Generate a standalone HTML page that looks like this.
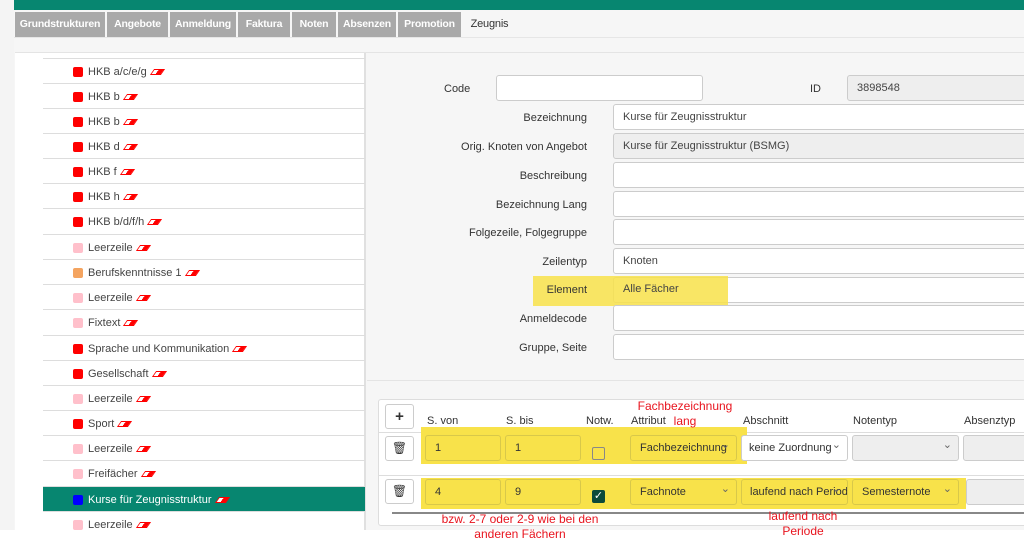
<!DOCTYPE html><html><head><meta charset="utf-8"><style>
*{box-sizing:border-box;margin:0;padding:0}
body{width:1024px;height:546px;background:#fff;font-family:"Liberation Sans",sans-serif;font-size:11px;color:#333;position:relative;overflow:hidden}
.a{position:absolute}
.tab{position:absolute;top:12px;height:25px;background:#a9a9a9;color:#fff;font-weight:bold;font-size:10.5px;line-height:25px;text-align:center;letter-spacing:-0.2px;white-space:nowrap;overflow:hidden}
.row{position:absolute;left:43px;width:322px;height:25px;border-top:1px solid #ddd;line-height:26px;padding-left:45px;font-size:11px;color:#444}
.sq{position:absolute;left:30px;top:8px;width:10px;height:10px;border-radius:2px}
.er{display:inline-block;width:11px;height:6px;border:1.5px solid #f00;background:linear-gradient(90deg,#fff 45%,#f00 45%);transform:skewX(-35deg);margin-left:5px;vertical-align:0px}
.lbl{position:absolute;right:437px;font-size:11px;color:#333;text-align:right}
.inp{position:absolute;left:613px;width:420px;height:26px;background:#fff;border:1px solid #ccc;border-radius:3px;font-size:11px;line-height:25px;padding-left:9px;color:#444}
.g{background:#eee}
.hl{position:absolute;background:#f8e24a}
.cell{position:absolute;height:26px;border:1px solid #d8c84a;border-radius:3px;font-size:11px;line-height:24px;padding-left:9px;color:#333;overflow:hidden;white-space:nowrap}
.sel{padding-right:16px}
.sel:after{content:"⌄";position:absolute;right:6px;top:-3px;font-size:11px;color:#666}
.th{position:absolute;top:415px;font-size:11px;color:#333}
.red{position:absolute;color:#e8141e;font-size:12px;text-align:center;line-height:15px}
.btn{position:absolute;left:385px;width:29px;height:25px;background:#fff;border:1px solid #ccc;border-radius:3px;text-align:center;line-height:23px;font-size:12px}
</style></head><body>
<div class="a" style="left:0;top:0;width:14px;height:546px;background:#f4f4f4"></div>
<div class="a" style="left:14px;top:0;width:1010px;height:10px;background:#078670"></div>
<div class="a" style="left:14px;top:10px;width:1010px;height:520px;background:#f6f6f6"></div>
<div class="a" style="left:14px;top:37px;width:1010px;height:1px;background:#e6e6e6"></div>
<div class="tab" style="left:15px;width:90px">Grundstrukturen</div>
<div class="tab" style="left:107px;width:61px">Angebote</div>
<div class="tab" style="left:170px;width:66px">Anmeldung</div>
<div class="tab" style="left:238px;width:52px">Faktura</div>
<div class="tab" style="left:292px;width:44px">Noten</div>
<div class="tab" style="left:338px;width:58px">Absenzen</div>
<div class="tab" style="left:398px;width:63px">Promotion</div>
<div class="tab" style="left:463px;width:53px;background:#f6f6f6;color:#333;font-weight:normal;font-size:11px">Zeugnis</div>
<div class="a" style="left:15px;top:52px;width:351px;height:478px;background:#fff;border-right:2px solid #e0e0e0"></div>
<div class="a" style="left:15px;top:52px;width:1009px;height:1px;background:#e4e4e4"></div>
<div class="a" style="left:0;top:530px;width:1024px;height:16px;background:#fff"></div>

<div class="row" style="top:58px"><span class="sq" style="background:#f00"></span>HKB a/c/e/g<span class="er"></span></div>
<div class="row" style="top:83px"><span class="sq" style="background:#f00"></span>HKB b<span class="er"></span></div>
<div class="row" style="top:108px"><span class="sq" style="background:#f00"></span>HKB b<span class="er"></span></div>
<div class="row" style="top:133px"><span class="sq" style="background:#f00"></span>HKB d<span class="er"></span></div>
<div class="row" style="top:158px"><span class="sq" style="background:#f00"></span>HKB f<span class="er"></span></div>
<div class="row" style="top:183px"><span class="sq" style="background:#f00"></span>HKB h<span class="er"></span></div>
<div class="row" style="top:208px"><span class="sq" style="background:#f00"></span>HKB b/d/f/h<span class="er"></span></div>
<div class="row" style="top:234px"><span class="sq" style="background:#ffc0cb"></span>Leerzeile<span class="er"></span></div>
<div class="row" style="top:259px"><span class="sq" style="background:#f4a460"></span>Berufskenntnisse 1<span class="er"></span></div>
<div class="row" style="top:284px"><span class="sq" style="background:#ffc0cb"></span>Leerzeile<span class="er"></span></div>
<div class="row" style="top:309px"><span class="sq" style="background:#ffc0cb"></span>Fixtext<span class="er"></span></div>
<div class="row" style="top:335px"><span class="sq" style="background:#f00"></span>Sprache und Kommunikation<span class="er"></span></div>
<div class="row" style="top:360px"><span class="sq" style="background:#f00"></span>Gesellschaft<span class="er"></span></div>
<div class="row" style="top:385px"><span class="sq" style="background:#ffc0cb"></span>Leerzeile<span class="er"></span></div>
<div class="row" style="top:410px"><span class="sq" style="background:#f00"></span>Sport<span class="er"></span></div>
<div class="row" style="top:435px"><span class="sq" style="background:#ffc0cb"></span>Leerzeile<span class="er"></span></div>
<div class="row" style="top:460px"><span class="sq" style="background:#ffc0cb"></span>Freifächer<span class="er"></span></div>
<div class="row" style="top:486px;background:#078670;color:#fff"><span class="sq" style="background:#00f"></span>Kurse für Zeugnisstruktur<span class="er"></span></div>
<div class="row" style="top:511px;height:19px"><span class="sq" style="background:#ffc0cb"></span>Leerzeile<span class="er"></span></div>

<div class="a" style="left:444px;top:83px">Code</div>
<div class="inp" style="left:496px;width:207px;top:75px"></div>
<div class="a" style="left:810px;top:83px">ID</div>
<div class="inp g" style="left:847px;top:75px">3898548</div>
<div class="lbl" style="top:112px">Bezeichnung</div><div class="inp" style="top:104px">Kurse für Zeugnisstruktur</div>
<div class="lbl" style="top:141px">Orig. Knoten von Angebot</div><div class="inp g" style="top:133px">Kurse für Zeugnisstruktur (BSMG)</div>
<div class="lbl" style="top:170px">Beschreibung</div><div class="inp" style="top:162px"></div>
<div class="lbl" style="top:199px">Bezeichnung Lang</div><div class="inp" style="top:191px"></div>
<div class="lbl" style="top:227px">Folgezeile, Folgegruppe</div><div class="inp" style="top:219px"></div>
<div class="lbl" style="top:256px">Zeilentyp</div><div class="inp" style="top:248px">Knoten</div>
<div class="inp" style="top:277px"></div>
<div class="hl" style="left:533px;top:276px;width:195px;height:30px;opacity:.85"></div>
<div class="lbl" style="top:284px">Element</div><div class="a" style="left:623px;top:283px;color:#444">Alle Fächer</div>
<div class="lbl" style="top:313px">Anmeldecode</div><div class="inp" style="top:305px"></div>
<div class="lbl" style="top:342px">Gruppe, Seite</div><div class="inp" style="top:334px"></div>
<div class="a" style="left:367px;top:380px;width:657px;height:1px;background:#e4e4e4"></div>

<div class="a" style="left:378px;top:399px;width:660px;height:127px;background:#fff;border:1px solid #ddd;border-radius:3px"></div>
<div class="a" style="left:379px;top:432px;width:645px;height:1px;background:#ddd"></div>
<div class="a" style="left:379px;top:475px;width:645px;height:1px;background:#ddd"></div>
<div class="a" style="left:392px;top:512px;width:632px;height:2px;background:#888"></div>
<div class="btn" style="top:404px;font-weight:bold;font-size:15px">+</div>
<div class="btn" style="top:436px">🗑</div>
<div class="btn" style="top:479px">🗑</div>
<div class="th" style="left:427px">S. von</div>
<div class="th" style="left:506px">S. bis</div>
<div class="th" style="left:586px">Notw.</div>
<div class="th" style="left:631px">Attribut</div>
<div class="th" style="left:743px">Abschnitt</div>
<div class="th" style="left:853px">Notentyp</div>
<div class="th" style="left:964px">Absenztyp</div>
<div class="hl" style="left:421px;top:427px;width:326px;height:37px"></div>
<div class="hl" style="left:421px;top:478px;width:545px;height:31px"></div>
<div class="cell" style="left:425px;top:435px;width:76px">1</div>
<div class="cell" style="left:505px;top:435px;width:76px">1</div>
<div class="a" style="left:592px;top:447px;width:13px;height:13px;border:1px solid #888;border-radius:2px"></div>
<div class="cell sel" style="left:630px;top:435px;width:107px">Fachbezeichnung</div>
<div class="cell sel" style="left:741px;top:435px;width:107px;background:#fff;border-color:#ccc;padding-left:7px">keine Zuordnung</div>
<div class="cell sel" style="left:852px;top:435px;width:107px;background:#eee;border-color:#ccc"></div>
<div class="cell" style="left:963px;top:435px;width:80px;background:#eee;border-color:#ccc"></div>
<div class="cell" style="left:425px;top:479px;width:76px">4</div>
<div class="cell" style="left:505px;top:479px;width:76px">9</div>
<div class="a" style="left:592px;top:490px;width:13px;height:13px;background:#0d4a3a;border-radius:2px;color:#fff;font-size:11px;line-height:13px;text-align:center">✓</div>
<div class="cell sel" style="left:630px;top:479px;width:107px">Fachnote</div>
<div class="cell sel" style="left:741px;top:479px;width:107px;padding-left:8px">laufend nach Periode</div>
<div class="cell sel" style="left:852px;top:479px;width:107px">Semesternote</div>
<div class="cell" style="left:966px;top:479px;width:80px;background:#eee;border-color:#ccc"></div>
<div class="red" style="left:620px;top:399px;width:130px">Fachbezeichnung<br>lang</div>
<div class="red" style="left:425px;top:512px;width:190px">bzw. 2-7 oder 2-9 wie bei den<br>anderen Fächern</div>
<div class="red" style="left:743px;top:509px;width:120px">laufend nach<br>Periode</div>
</body></html>
